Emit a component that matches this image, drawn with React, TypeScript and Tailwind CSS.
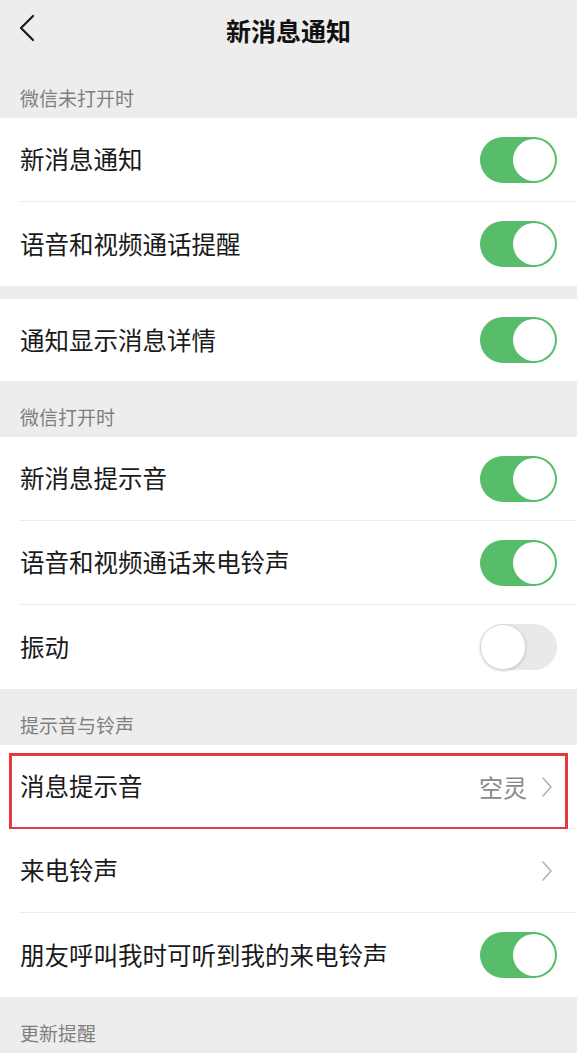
import React from 'react';

const font = { fontFamily: '"Noto Sans CJK SC", "Noto Sans", sans-serif' };

function Toggle({ on }: { on: boolean }) {
  return on ? (
    <div className="flex h-[46px] w-[77px] items-center justify-end rounded-full bg-[#57bd6a] pr-[2px]">
      <div className="h-[42px] w-[42px] rounded-full bg-white" />
    </div>
  ) : (
    <div className="flex h-[46px] w-[77px] items-center rounded-full bg-[#e9e9ea]">
      <div className="h-[46px] w-[46px] rounded-full border border-[#dcdcdc] bg-white shadow-[0_1px_3px_rgba(0,0,0,0.18)]" />
    </div>
  );
}

function Chevron() {
  return (
    <svg width="12" height="22" viewBox="0 0 12 22" fill="none" className="ml-[14px] mr-[4px]">
      <path d="M2 2l8 9-8 9" stroke="#b2b2b2" strokeWidth="1.6" strokeLinecap="round" strokeLinejoin="round" />
    </svg>
  );
}

function Row({
  label,
  toggle,
  value,
  arrow,
  divider,
  highlight,
  short,
}: {
  label: string;
  toggle?: boolean;
  value?: string;
  arrow?: boolean;
  divider?: boolean;
  highlight?: boolean;
  short?: boolean;
}) {
  return (
    <div className="relative bg-white pl-[20px]">
      <div
        className={`flex items-center pr-[20px] ${short ? 'h-[82px]' : 'h-[84px]'} ${
          divider ? 'border-b border-[#ececec]' : ''
        }`}
      >
        <span className="flex-1 text-[24.5px] text-[#1a1a1a]">{label}</span>
        {value && <span className="text-[24px] text-[#8a8a8a]">{value}</span>}
        {arrow && <Chevron />}
        {toggle !== undefined && <Toggle on={toggle} />}
      </div>
      {highlight && (
        <div className="pointer-events-none absolute left-[9px] right-[9px] top-[8px] bottom-[-1px] border-[3px] border-[#e6393f]" />
      )}
    </div>
  );
}

function SectionLabel({ text }: { text: string }) {
  return (
    <div className="flex h-[56px] items-end pb-[6px] pl-[20px] text-[19px] text-[#7f7f7f]">{text}</div>
  );
}

export default function App() {
  return (
    <div className="min-h-[1059px] w-[577px] bg-[#ededed]" style={font}>
      <div className="relative flex h-[62px] items-center justify-center">
        <svg width="18" height="28" viewBox="0 0 18 28" fill="none" className="absolute left-[18px] top-[14px]">
          <path d="M15 2L3 14l12 12" stroke="#1a1a1a" strokeWidth="2.2" strokeLinecap="round" strokeLinejoin="round" />
        </svg>
        <span className="text-[25px] font-bold text-[#111]">新消息通知</span>
      </div>
      <SectionLabel text="微信未打开时" />
      <Row label="新消息通知" toggle divider />
      <Row label="语音和视频通话提醒" toggle />
      <div className="h-[13px]" />
      <Row label="通知显示消息详情" toggle short />
      <SectionLabel text="微信打开时" />
      <Row label="新消息提示音" toggle divider />
      <Row label="语音和视频通话来电铃声" toggle divider />
      <Row label="振动" toggle={false} />
      <SectionLabel text="提示音与铃声" />
      <Row label="消息提示音" value="空灵" arrow divider highlight />
      <Row label="来电铃声" arrow divider />
      <Row label="朋友呼叫我时可听到我的来电铃声" toggle />
      <SectionLabel text="更新提醒" />
      <div className="h-[10px] bg-white" />
    </div>
  );
}
